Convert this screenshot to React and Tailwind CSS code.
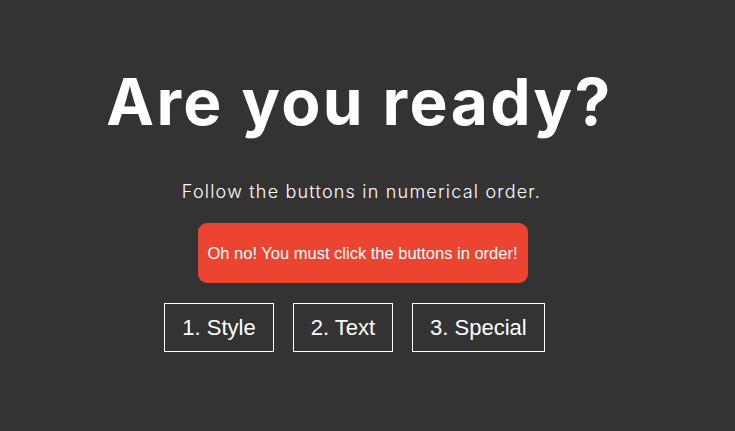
import React from "react";

function App() {
    const buttons = ["1. Style", "2. Text", "3. Special"];
    return (
        <div className="min-h-screen w-full bg-[#333333] text-white flex flex-col items-center pt-[62px]">
            <h1 className="font-['Inter',sans-serif] font-bold text-[64px] leading-[80px] tracking-[2.4px] pr-[16px]">
                Are you ready?
            </h1>
            <p className="mt-[38px] font-['Inter',sans-serif] font-light text-[18px] leading-[24px] tracking-[1.2px] pr-[12px]">
                Follow the buttons in numerical order.
            </p>
            <div className="mt-[19px] w-[330px] h-[60px] rounded-[9px] bg-[#eb4531] flex items-center justify-center font-['Liberation_Sans',Arial,sans-serif] text-[16.5px] mr-[10px]">
                Oh no! You must click the buttons in order!
            </div>
            <div className="mt-[20px] flex gap-[19px] mr-[26px]">
                {buttons.map((b) => (
                    <button
                        key={b}
                        className="h-[49px] px-[17px] border border-white font-['Liberation_Sans',Arial,sans-serif] text-[22px] text-white"
                    >
                        {b}
                    </button>
                ))}
            </div>
        </div>
    );
}

export default App;
